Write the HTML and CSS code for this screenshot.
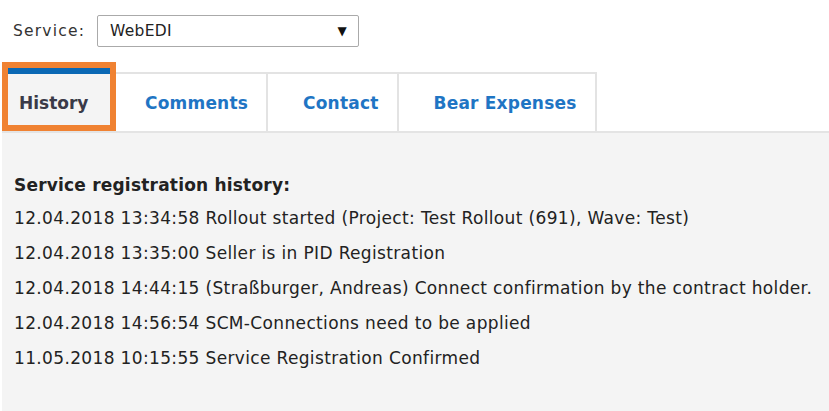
FILE: index.html
```html
<!DOCTYPE HTML>
<html>
	<head>
		<meta charset="utf-8">
		<link rel="stylesheet" href="styles.css">
	</head>
	<body>
		<div class="service">
			<label>Service:</label>
			<div class="select">
				<span>WebEDI</span>
				<span class="arrow">&#9660;</span>
			</div>
		</div>
		<div class="tabs">
			<div class="tab active">History</div>
			<div class="tab">Comments</div>
			<div class="tab">Contact</div>
			<div class="tab">Bear Expenses</div>
		</div>
		<div class="panel">
			<p class="title">Service registration history:</p>
			<p>12.04.2018 13:34:58 Rollout started (Project: Test Rollout (691), Wave: Test)</p>
			<p>12.04.2018 13:35:00 Seller is in PID Registration</p>
			<p>12.04.2018 14:44:15 (Straßburger, Andreas) Connect confirmation by the contract holder.</p>
			<p>12.04.2018 14:56:54 SCM-Connections need to be applied</p>
			<p>11.05.2018 10:15:55 Service Registration Confirmed</p>
		</div>
	</body>
</html>
```
FILE: styles.css
```css
body {
	margin: 0;
	font-family: "DejaVu Sans", Verdana, sans-serif;
	color: #222;
	background: #fff;
}

.service {
	display: flex;
	align-items: center;
	padding: 15px 0 0 13px;
	font-size: 15.5px;
}

.service label {
	width: 84px;
	color: #333;
	letter-spacing: 1.2px;
}

.select {
	display: flex;
	align-items: center;
	justify-content: space-between;
	width: 262px;
	height: 32px;
	box-sizing: border-box;
	padding: 0 11px 0 12px;
	border: 1px solid #aaa;
	border-radius: 2px;
	letter-spacing: 0.3px;
	color: #222;
}

.arrow {
	font-size: 12px;
	color: #111;
}

.tabs {
	display: flex;
	align-items: flex-end;
	margin: 21px 0 0 8px;
}

.tab {
	box-sizing: border-box;
	height: 59px;
	display: flex;
	align-items: center;
	padding: 0 18px 0 35px;
	border-top: 2px solid #e3e3e3;
	border-right: 2px solid #e3e3e3;
	font-size: 17px;
	font-weight: bold;
	letter-spacing: 0.2px;
	color: #1f75c4;
	background: #fff;
}

/* orange outline is the highlight drawn round the selected tab */
.tab.active {
	width: 102px;
	height: 57px;
	margin-bottom: 6px;
	padding: 12px 0 0 11px;
	border: none;
	outline: 6px solid #f08232;
	box-shadow: inset 0 6px 0 #0a68b4;
	background: #f4f4f4;
	color: #3a3a48;
	letter-spacing: 0;
	position: relative;
	z-index: 1;
}

.panel {
	margin-left: 2px;
	background: #f4f4f4;
	border-top: 2px solid #e4e4e4;
	padding: 42px 0 0 12px;
	font-size: 17px;
	letter-spacing: 0.35px;
	height: 280px;
	box-sizing: border-box;
}

.panel p {
	margin: 0;
	height: 35px;
	white-space: nowrap;
}

.panel .title {
	font-weight: bold;
	letter-spacing: 0.2px;
	height: 33px;
}
```
